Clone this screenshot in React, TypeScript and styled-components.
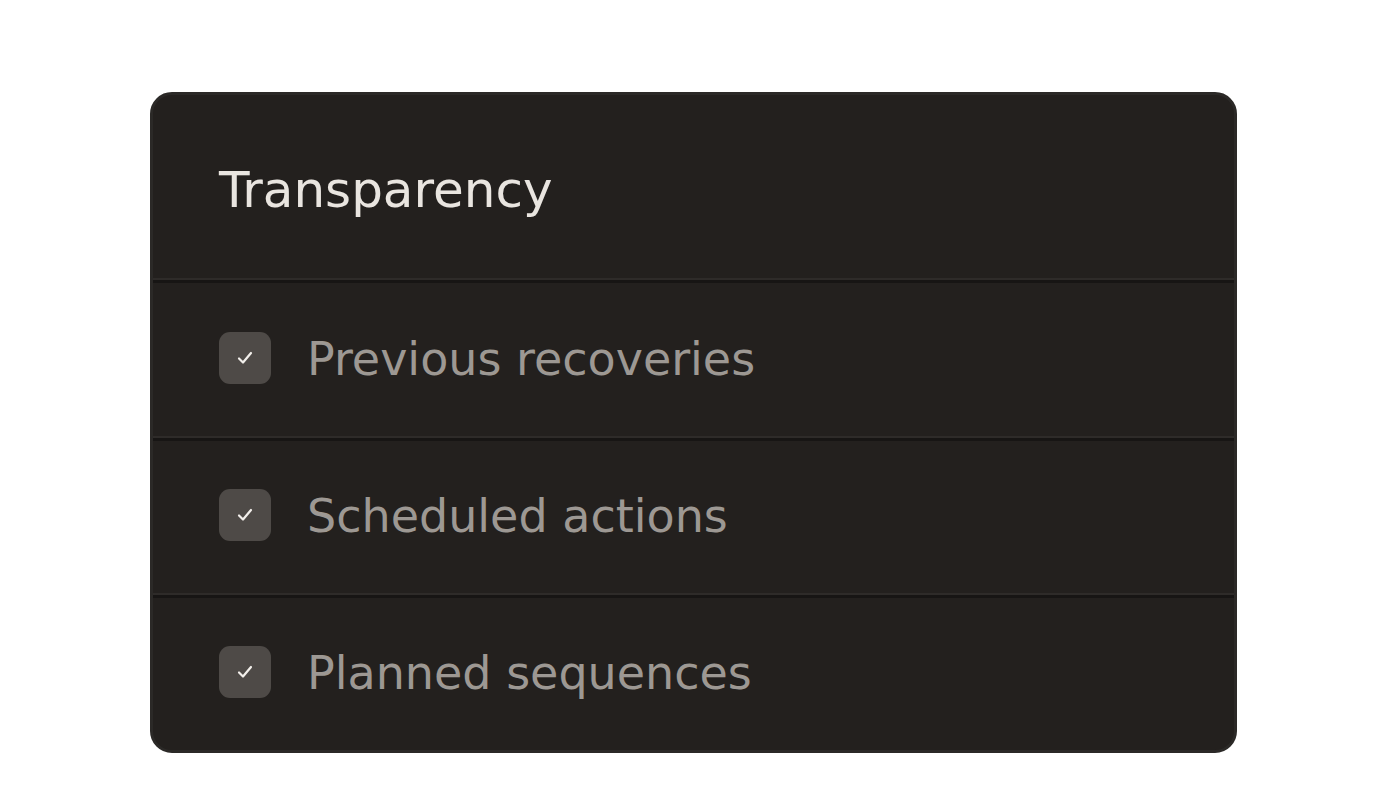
import styled, { createGlobalStyle } from "styled-components";

const GlobalStyle = createGlobalStyle`
    body {
        margin: 0;
        background: #ffffff;
        font-family: "DejaVu Sans", "Noto Sans", sans-serif;
    }
`;

const Page = styled.div`
    padding: 92px 0 0 150px;
`;

const Card = styled.div`
    width: 1081px;
    height: 655px;
    border: 3px solid #2b2927;
    border-radius: 22px;
    background: #23201e;
    display: flex;
    flex-direction: column;
    overflow: hidden;
`;

const Header = styled.div`
    height: 183px;
    display: flex;
    align-items: center;
    padding-left: 66px;
    padding-top: 6px;
    box-sizing: border-box;
`;

const Title = styled.h1`
    margin: 0;
    color: #e9e5e0;
    font-size: 50px;
    font-weight: 400;
`;

const Divider = styled.div`
    height: 3px;
    border-top: 2px solid #2e2b29;
    background: #171514;
`;

const Row = styled.div<{ $height: number }>`
    height: ${(p) => p.$height}px;
    box-sizing: border-box;
    padding-bottom: 4px;
    flex-shrink: 0;
    display: flex;
    align-items: center;
    padding-left: 66px;
    gap: 36px;
`;

const Box = styled.div`
    width: 52px;
    height: 52px;
    border-radius: 11px;
    background: #4e4a47;
    display: flex;
    align-items: center;
    justify-content: center;
`;

const Label = styled.span`
    color: #9d9893;
    font-size: 46px;
    padding-top: 2px;
`;

function Check() {
    return (
        <svg width="18" height="16" viewBox="0 0 18 16">
            <path d="M3 8.5 L7 12.5 L15 3" fill="none" stroke="#f2efeb" strokeWidth="2.2" strokeLinecap="round" strokeLinejoin="round" />
        </svg>
    );
}

function App() {
    const items = [
        { label: "Previous recoveries", height: 153 },
        { label: "Scheduled actions", height: 152 },
        { label: "Planned sequences", height: 152 },
    ];
    return (
        <Page>
            <GlobalStyle />
            <Card>
                <Header>
                    <Title>Transparency</Title>
                </Header>
                {items.map((item, index) => (
                    <div key={index}>
                        <Divider />
                        <Row $height={item.height}>
                            <Box>
                                <Check />
                            </Box>
                            <Label>{item.label}</Label>
                        </Row>
                    </div>
                ))}
            </Card>
        </Page>
    );
}

export default App;
